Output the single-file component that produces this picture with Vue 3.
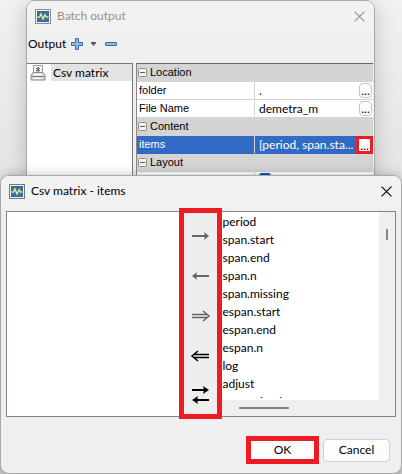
<script setup>
import { ref } from 'vue'

const items = ['period', 'span.start', 'span.end', 'span.n', 'span.missing', 'espan.start', 'espan.end', 'espan.n', 'log', 'adjust', 'regression.lp']
const rows = [
  { group: 'Location' },
  { name: 'folder', value: '.' },
  { name: 'File Name', value: 'demetra_m' },
  { group: 'Content' },
  { name: 'items', value: '[period, span.sta...', selected: true },
  { group: 'Layout' },
]
const moves = [
  { label: 'Add selected', dim: true, shape: 'right' },
  { label: 'Remove selected', dim: true, shape: 'left' },
  { label: 'Add all', dim: true, shape: 'allRight' },
  { label: 'Remove all', dim: false, shape: 'allLeft' },
  { label: 'Swap', dim: false, shape: 'swap' },
]
const selectedItems = ref([])
</script>

<template>
  <main class="desktop">
    <section class="window back" aria-label="Batch output">
      <header class="titlebar">
        <svg class="logo" viewBox="0 0 16 15" aria-hidden="true">
          <rect x=".5" y=".5" width="15" height="14" fill="#f4f4f4" stroke="#8c8c8c" />
          <rect x="2" y="2" width="12" height="11" fill="#2b67a0" />
          <path d="M2 5h12M2 10h12M5 2v11M11 2v11" stroke="#4f88b5" stroke-width=".7" />
          <path d="M2.500 8h2l1.500-3 2 5 2-4 1.500 2h2" fill="none" stroke="#e2eb8c" stroke-width="1.500" />
        </svg>
        <h1>Batch output</h1>
        <button class="close" aria-label="Close batch output">
          <svg viewBox="0 0 10 10"><path d="M.5.5l9 9M9.500.5l-9 9" /></svg>
        </button>
      </header>
      <div class="toolbar">
        <span>Output</span>
        <button class="tool" aria-label="Add output">
          <svg width="12" height="12" viewBox="0 0 12 12"><path d="M4.500.5h3v4h4v3h-4v4h-3v-4h-4v-3h4z" fill="#8dbbe8" stroke="#356cae" /></svg>
        </button>
        <button class="tool drop" aria-label="Output types">
          <svg width="5" height="4" viewBox="0 0 5 4"><path d="M0 0h5v1L2.500 4 0 1z" fill="#555" /></svg>
        </button>
        <button class="tool" aria-label="Remove output">
          <svg width="12" height="4" viewBox="0 0 12 4"><rect x=".5" y=".5" width="11" height="3" rx=".5" fill="#8dbbe8" stroke="#356cae" /></svg>
        </button>
      </div>
      <div class="split">
        <div class="outputs">
          <svg class="printer" width="16" height="16" viewBox="0 0 16 16" aria-hidden="true">
            <path d="M3.500 8V.5h9V8" fill="#f3f3f3" stroke="#999" />
            <path d="M8 2v5M6 3l4 3M10 3L6 6" stroke="#555" />
            <path d="M3 7.500h10l2 3v4.500H1v-4.500z" fill="#ddd" stroke="#888" />
            <path d="M4 9.500h8" stroke="#fff" stroke-width="2" />
            <path d="M1.500 11.500h13" stroke="#777" />
            <path d="M3 13.500h8" stroke="#fff" />
          </svg>
          <span class="output-name">Csv matrix</span>
        </div>
        <table class="props">
          <colgroup><col class="names" /><col /></colgroup>
          <tbody>
            <tr v-for="row in rows" :key="row.group || row.name" :class="{ group: row.group, selected: row.selected }">
              <th v-if="row.group" colspan="2">
                <svg class="fold" width="9" height="9" viewBox="0 0 9 9" aria-hidden="true"><rect x=".5" y=".5" width="8" height="8" rx="1" fill="#f4f4f4" stroke="#8e8e8e" /><path d="M2 4.500h5" stroke="#3d5d9c" /></svg>{{ row.group }}
              </th>
              <template v-else>
                <th>{{ row.name }}</th>
                <td>
                  <div class="value">
                    <span>{{ row.value }}</span>
                    <button class="more" :class="{ marked: row.selected }" :aria-label="'Edit ' + row.name">...</button>
                  </div>
                </td>
              </template>
            </tr>
            <tr class="partial"><th></th><td><i class="check"></i></td></tr>
          </tbody>
        </table>
      </div>
    </section>

    <section class="window front" role="dialog" aria-label="Csv matrix - items">
      <header class="titlebar">
        <svg class="logo" viewBox="0 0 16 15" aria-hidden="true">
          <rect x=".5" y=".5" width="15" height="14" fill="#f4f4f4" stroke="#777" />
          <rect x="2" y="2" width="12" height="11" fill="#2b67a0" />
          <path d="M2 5h12M2 10h12M5 2v11M11 2v11" stroke="#4f88b5" stroke-width=".7" />
          <path d="M2.500 8h2l1.500-3 2 5 2-4 1.500 2h2" fill="none" stroke="#e2eb8c" stroke-width="1.500" />
        </svg>
        <h2>Csv matrix - items</h2>
        <button class="close" aria-label="Close items">
          <svg viewBox="0 0 10 10"><path d="M.5.5l9 9M9.500.5l-9 9" /></svg>
        </button>
      </header>
      <div class="picker">
        <ul class="chosen" aria-label="Selected items"><li v-for="s in selectedItems" :key="s">{{ s }}</li></ul>
        <div class="moves">
          <button v-for="m in moves" :key="m.shape" :aria-label="m.label" :class="{ dim: m.dim }">
            <svg width="19" height="18" viewBox="0 0 19 18">
              <template v-if="m.shape === 'right'"><path class="line" d="M1 9h14" /><path class="head" d="M13 5l5 4-5 4 1-4z" /></template>
              <template v-else-if="m.shape === 'left'"><path class="line" d="M4 9h14" /><path class="head" d="M6 5L1 9l5 4-1-4z" /></template>
              <path v-else-if="m.shape === 'allRight'" class="double" d="M1 7.500h15M1 10.500h15M12 4l6 5l-6 5" />
              <path v-else-if="m.shape === 'allLeft'" class="double" d="M3 7.500h15M3 10.500h15M7 4l-6 5l6 5" />
              <template v-else>
                <path class="line" d="M1 3h14M4 13h14" />
                <path class="head" d="M12-1l6 4-6 4 1-4zM7 9l-6 4 6 4-1-4z" />
              </template>
            </svg>
          </button>
        </div>
        <div class="available">
          <ul aria-label="Available items"><li v-for="item in items" :key="item">{{ item }}</li></ul>
          <div class="vbar"><i></i></div>
          <div class="hbar"><i></i></div>
        </div>
      </div>
      <footer>
        <button class="action marked">OK</button>
        <button class="action">Cancel</button>
      </footer>
    </section>
  </main>
</template>

<style>
body { margin: 0; background: #ededed; }
</style>

<style scoped>
* { box-sizing: border-box; }
.desktop {
  font: 12px/18px Lato, "Open Sans", sans-serif;
  color: #000;
  overflow: hidden;
  background: linear-gradient(#f1f1f1, #e4e4e4 180px, #c8c8c8);
}
button { font: inherit; color: inherit; padding: 0; margin: 0; border: 0; background: none; display: flex; align-items: center; justify-content: center; }
ul { list-style: none; margin: 0; padding: 0; }
.window { display: flex; flex-direction: column; border: 1px solid #a9a9a9; border-radius: 9px; background: #efefef; overflow: hidden; }
.back { margin: 0 27px 0 26px; height: 186px; box-shadow: 0 4px 20px rgba(0, 0, 0, .2); }
.front { position: relative; margin-top: -11px; box-shadow: 0 0 12px rgba(0, 0, 0, .25); }
.titlebar { display: flex; align-items: center; height: 30px; flex: none; padding: 0 9px 0 8px; background: #f2f2f2; }
.logo { width: 16px; height: 15px; margin-right: 6px; }
h1, h2 { flex: 1; margin: 0; font: inherit; }
.back .titlebar { color: #919191; }
.close { width: 11px; height: 18px; }
.close svg { width: 11px; height: 11px; fill: none; stroke: currentColor; }
.toolbar { display: flex; align-items: center; height: 32px; flex: none; padding: 0 1px 6px; }
.tool { height: 12px; margin-left: 5px; }
.drop { margin: 0 4px 0 8px; }
.split { display: flex; gap: 3px; flex: 1; padding-right: 1px; }
.outputs { flex: none; width: 106px; border: 1px solid #777; border-left: 0; background: #fff; display: flex; align-items: flex-start; padding-left: 3px; }
.printer { margin: 1px 5px 0 0; }
.output-name { flex: 1; padding-left: 2px; background: #e3e3e3; line-height: 17px; }
.props { flex: 1; width: 0; table-layout: fixed; border-collapse: separate; border-spacing: 0; border-top: 1px solid #666; border-left: 1px solid #888; }
.names { width: 118px; }
.props th, .props td { height: 18px; padding: 0; text-align: left; font-weight: normal; background: #fff; border-bottom: 1px solid #d3d3d3; line-height: 17px; }
.props th { padding-left: 2px; border-right: 1px solid #d3d3d3; font-family: "Liberation Sans", Arial, sans-serif; font-size: 11px; }
.props td { padding-left: 4px; }
.props .group th { background: #d4d4d4; padding-left: 1px; }
.fold { vertical-align: -1px; margin-right: 3px; }
.props .selected th, .props .selected td { background: #316ac5; color: #fff; border-bottom-color: #316ac5; }
.props .partial td { vertical-align: top; padding-top: 1px; }
.value { display: flex; height: 17px; justify-content: space-between; white-space: nowrap; }
.value span { min-width: 0; }
.more { flex: none; width: 13px; height: 15px; margin: 1px 1px 0 0; border: 1px solid #c6c6c6; border-radius: 4px; background: #fdfdfd; color: #000; line-height: 13px; }
.more.marked { width: 17px; height: 18px; margin: 0; border: 3px solid #ed1c24; border-radius: 0; }
.check { display: block; width: 12px; height: 12px; border-radius: 3px; background: #0759b0; }
.picker { display: flex; height: 206px; margin: 5px 5px 0; border: 1px solid #80858f; background: #fff; }
.chosen { flex: 171; }
.moves { flex: none; width: 43px; margin: -4px 0 -3px; border: 5px solid #ed1c24; background: #eee; display: flex; flex-direction: column; align-items: center; justify-content: space-between; padding: 14px 0 9px; }
.moves svg { overflow: visible; }
.line { stroke: currentColor; stroke-width: 2; }
.head { fill: currentColor; }
.double { fill: none; stroke: currentColor; stroke-width: 1.500; }
.dim { color: #656565; }
.available { flex: 173; min-width: 0; display: grid; grid-template: 188px 1fr / 1fr 16px; background: #efefef; }
.available ul { overflow: hidden; background: #fff; padding: 1px 0 0 1px; border-bottom: 2px solid #fff; }
.vbar i { display: block; width: 2px; height: 11px; margin: 17px 0 0 7px; background: #858585; }
.hbar i { display: block; width: 50px; height: 2px; margin: 7px 0 0 17px; background: #858585; }
footer { display: flex; align-items: center; justify-content: flex-end; gap: 4px; padding: 19px 11px 9px 0; }
.action { width: 67px; height: 23px; border: 1px solid #d0d0d0; border-radius: 4px; background: #fdfdfd; }
.action.marked { width: 73px; height: 28px; border: 5px solid #ed1c24; border-radius: 0; }
</style>
